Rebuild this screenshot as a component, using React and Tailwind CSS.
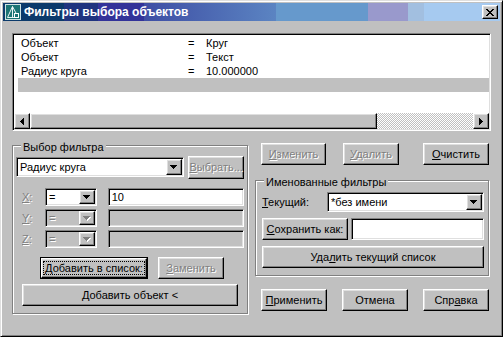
import React from "react";

const FACE = "bg-[#c0c0c0]";
const RAISED =
  "border border-t-white border-l-white border-r-black border-b-black shadow-[inset_-1px_-1px_0_#808080,inset_1px_1px_0_#dfdfdf]";
const SUNKEN =
  "border border-t-[#808080] border-l-[#808080] border-r-white border-b-white shadow-[inset_1px_1px_0_#000,inset_-1px_-1px_0_#dfdfdf]";
const DIS = "text-[#808080] [text-shadow:1px_1px_0_#fff]";
const ETCHED =
  "border border-[#808080] shadow-[inset_1px_1px_0_#fff,1px_1px_0_#fff]";

function U({ children }) {
  return <span className="underline underline-offset-[1px]">{children}</span>;
}

function Btn({ children, className = "", disabled, def }) {
  const inner = (
    <div
      className={`${RAISED} ${FACE} w-full h-full flex items-center justify-center whitespace-nowrap ${
        disabled ? DIS : ""
      }`}
    >
      {children}
    </div>
  );
  if (def)
    return <div className={`border border-black flex ${className}`}>{inner}</div>;
  return <div className={`flex ${className}`}>{inner}</div>;
}

function DownArrow({ disabled }) {
  const fill = disabled ? "#808080" : "#000";
  return (
    <svg width="8" height="5" viewBox="0 0 8 5" shapeRendering="crispEdges">
      {disabled && (
        <g fill="#fff">
          <rect x="1" y="1" width="7" height="1" />
          <rect x="2" y="2" width="5" height="1" />
          <rect x="3" y="3" width="3" height="1" />
          <rect x="4" y="4" width="1" height="1" />
        </g>
      )}
      <g fill={fill}>
        <rect x="0" y="0" width="7" height="1" />
        <rect x="1" y="1" width="5" height="1" />
        <rect x="2" y="2" width="3" height="1" />
        <rect x="3" y="3" width="1" height="1" />
      </g>
    </svg>
  );
}

function LeftArrow() {
  return (
    <svg width="4" height="7" viewBox="0 0 4 7" shapeRendering="crispEdges">
      <g fill="#000">
        <rect x="0" y="3" width="1" height="1" />
        <rect x="1" y="2" width="1" height="3" />
        <rect x="2" y="1" width="1" height="5" />
        <rect x="3" y="0" width="1" height="7" />
      </g>
    </svg>
  );
}

function RightArrow() {
  return (
    <svg width="4" height="7" viewBox="0 0 4 7" shapeRendering="crispEdges">
      <g fill="#000">
        <rect x="0" y="0" width="1" height="7" />
        <rect x="1" y="1" width="1" height="5" />
        <rect x="2" y="2" width="1" height="3" />
        <rect x="3" y="3" width="1" height="1" />
      </g>
    </svg>
  );
}

function CloseX() {
  const px = [
    [0, 0, 2], [6, 0, 2],
    [1, 1, 2], [5, 1, 2],
    [2, 2, 4],
    [3, 3, 2],
    [2, 4, 4],
    [1, 5, 2], [5, 5, 2],
    [0, 6, 2], [6, 6, 2],
  ];
  return (
    <svg width="8" height="7" viewBox="0 0 8 7" shapeRendering="crispEdges">
      {px.map(([x, y, w], i) => (
        <rect key={i} x={x} y={y} width={w} height="1" fill="#000" />
      ))}
    </svg>
  );
}

function AppIcon() {
  return (
    <svg width="16" height="16" viewBox="0 0 16 16" shapeRendering="crispEdges">
      <rect x="0" y="0" width="16" height="16" fill="#cfe3e3" />
      <rect x="1" y="1" width="14" height="14" fill="#1b7474" />
      <path d="M2.5 13.5 L7.5 2.5 L12.5 12 M7.5 2.5 V13.5 M2.5 13.5 H9" stroke="#e8f4f4" strokeWidth="1" fill="none" shapeRendering="auto" />
      <rect x="9.5" y="9.5" width="4" height="4" fill="#1b7474" stroke="#ffffff" />
    </svg>
  );
}

function Combo({ children, className = "", disabled }) {
  return (
    <div
      className={`${SUNKEN} ${disabled ? FACE : "bg-white"} flex p-[1px] ${className}`}
    >
      <div
        className={`flex-1 flex items-center pl-[2px] whitespace-nowrap ${
          disabled ? DIS : ""
        }`}
      >
        {children}
      </div>
      <div className={`${RAISED} ${FACE} w-[16px] flex items-center justify-center`}>
        <DownArrow disabled={disabled} />
      </div>
    </div>
  );
}

function Edit({ children, className = "", disabled }) {
  return (
    <div
      className={`${SUNKEN} ${disabled ? FACE : "bg-white"} flex items-center pl-[3px] ${className}`}
    >
      {children}
    </div>
  );
}

function TitleBar() {
  return (
    <div className="h-[18px] shrink-0 flex items-center bg-[linear-gradient(to_right,#0b3a6b_0px,#0b3a6b_61px,#1f347f_61px,#1f347f_95px,#333399_95px,#333399_141px,#3e4ea4_141px,#5b84c2_273px,#6699cc_273px,#6699cc_365px,#9999cc_365px,#9999cc_405px,#a2bfe0_405px,#a2bfe0_421px,#a6caf0_421px,#a6caf0_100%)]">
      <div className="ml-[2px] flex">
        <AppIcon />
      </div>
      <span className="ml-[3px] text-white font-bold text-[12px] leading-[14px] whitespace-nowrap">
        Фильтры выбора объектов
      </span>
      <div
        className={`ml-auto mr-[2px] w-[16px] h-[14px] ${RAISED} ${FACE} flex items-center justify-center`}
      >
        <CloseX />
      </div>
    </div>
  );
}

function ListBox() {
  const rows = [
    ["Объект", "=", "Круг"],
    ["Объект", "=", "Текст"],
    ["Радиус круга", "=", "10.000000"],
  ];
  return (
    <div className={`${SUNKEN} bg-white h-[98px] flex flex-col p-[1px]`}>
      <div className="flex-1 flex flex-col pt-[1px] pl-[4px]">
        {rows.map((r, i) => (
          <div key={i} className="h-[14px] flex items-center pl-[3px] whitespace-nowrap">
            <span className="w-[167px]">{r[0]}</span>
            <span className="w-[18px]">{r[1]}</span>
            <span>{r[2]}</span>
          </div>
        ))}
        <div className="h-[14px] bg-[#c0c0c0]" />
      </div>
      <div className="h-[16px] flex shrink-0">
        <div className={`${RAISED} ${FACE} w-[16px] flex items-center justify-center`}>
          <LeftArrow />
        </div>
        <div className={`${RAISED} ${FACE} w-[347px]`} />
        <div className="flex-1 bg-[repeating-conic-gradient(#c0c0c0_0%_25%,#ffffff_0%_50%)] bg-[length:2px_2px]" />
        <div className={`${RAISED} ${FACE} w-[16px] flex items-center justify-center`}>
          <RightArrow />
        </div>
      </div>
    </div>
  );
}

function GroupLabel({ children }) {
  return (
    <span className={`absolute left-[8px] top-[-5px] px-[2px] ${FACE} whitespace-nowrap`}>
      {children}
    </span>
  );
}

function XYZRow({ label, value, disabled, className = "" }) {
  return (
    <div className={`flex h-[18px] ${className}`}>
      <div className={`w-[29px] pl-[6px] flex items-center ${DIS}`}>
        <U>{label}</U>:
      </div>
      <Combo className="w-[52px] h-[18px]" disabled={disabled}>
        =
      </Combo>
      <Edit className="ml-[11px] w-[137px] h-[18px]" disabled={disabled}>
        {value}
      </Edit>
    </div>
  );
}

function LeftGroup() {
  return (
    <div className={`relative mt-[14px] w-[236px] h-[169px] ${ETCHED} pt-[11px] px-[3px] flex flex-col`}>
      <GroupLabel>Выбор фильтра</GroupLabel>
      <div className="flex items-center h-[20px]">
        <Combo className="w-[169px] h-[20px]">Радиус круга</Combo>
        <Btn className="ml-[4px] w-[56px] h-[23px]" disabled>
          <span>
            <U>В</U>ыбрать...
          </span>
        </Btn>
      </div>
      <XYZRow className="mt-[11px]" label="X" value="10" />
      <XYZRow className="mt-[3px]" label="Y" disabled />
      <XYZRow className="mt-[3px]" label="Z" disabled />
      <div className="flex mt-[9px]">
        <Btn def className="ml-[24px] w-[108px] h-[22px]">
          <span className="border border-dotted border-black px-[1px] leading-[12px]">
            <U>Д</U>обавить в список:
          </span>
        </Btn>
        <Btn className="ml-[10px] w-[66px] h-[22px]" disabled>
          <span>
            <U>З</U>аменить
          </span>
        </Btn>
      </div>
      <Btn className="mt-[5px] ml-[6px] w-[216px] h-[22px]">Добавить объект &lt;</Btn>
    </div>
  );
}

function RightCol() {
  return (
    <div className="w-[235px] flex flex-col">
      <div className="flex mt-[12px]">
        <Btn className="ml-[6px] w-[65px] h-[22px]" disabled>
          <span>
            <U>И</U>зменить
          </span>
        </Btn>
        <Btn className="ml-[17px] w-[56px] h-[22px]" disabled>
          <span>
            <U>У</U>далить
          </span>
        </Btn>
        <Btn className="ml-auto mr-[1px] w-[66px] h-[22px]">
          <span>
            <U>О</U>чистить
          </span>
        </Btn>
      </div>
      <div className={`relative mt-[15px] w-[234px] h-[96px] ${ETCHED} pt-[11px] pl-[6px] pr-[4px] flex flex-col`}>
        <GroupLabel>Именованные фильтры</GroupLabel>
        <div className="flex h-[20px]">
          <div className="w-[65px] flex items-center">
            <span>
              <U>Т</U>екущий:
            </span>
          </div>
          <Combo className="flex-1 h-[20px]">*без имени</Combo>
        </div>
        <div className="flex mt-[6px] h-[22px]">
          <Btn className="w-[86px] h-[22px]">
            <span>
              <U>С</U>охранить как:
            </span>
          </Btn>
          <Edit className="ml-[3px] flex-1 h-[22px]" />
        </div>
        <Btn className="mt-[6px] h-[22px]">
          <span>
            Уда<U>л</U>ить текущий список
          </span>
        </Btn>
      </div>
      <div className="flex mt-[13px]">
        <Btn className="ml-[6px] w-[66px] h-[22px]">
          <span>
            <U>П</U>рименить
          </span>
        </Btn>
        <Btn className="ml-[15px] w-[66px] h-[22px]">Отмена</Btn>
        <Btn className="ml-[15px] w-[66px] h-[22px]">
          <span>
            Спр<U>а</U>вка
          </span>
        </Btn>
      </div>
    </div>
  );
}

export default function App() {
  return (
    <div className="w-[503px] h-[337px] bg-[#c0c0c0] border border-t-[#dfdfdf] border-l-[#dfdfdf] border-r-black border-b-black shadow-[inset_1px_1px_0_#fff,inset_-1px_-1px_0_#808080] p-[2px] font-['Liberation_Sans',Arial,sans-serif] text-[11px] leading-[13px] text-black flex flex-col overflow-hidden">
      <TitleBar />
      <div className="flex flex-col px-[9px] pt-[12px]">
        <ListBox />
        <div className="flex gap-[7px]">
          <LeftGroup />
          <RightCol />
        </div>
      </div>
    </div>
  );
}
